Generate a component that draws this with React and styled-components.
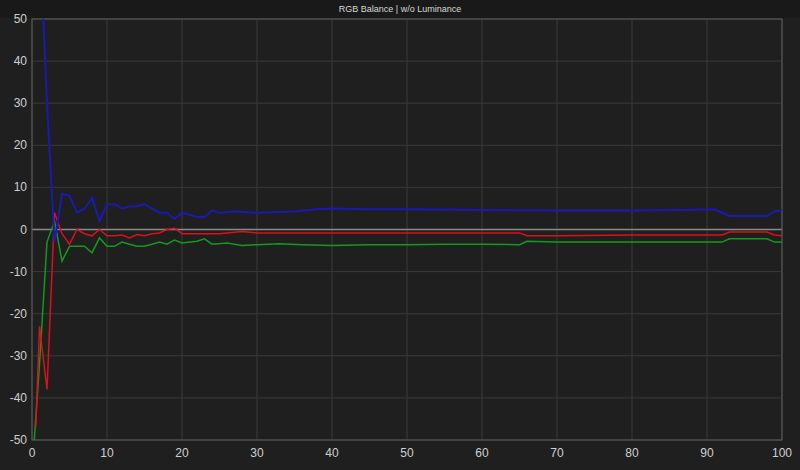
import React from "react";
import styled, { createGlobalStyle } from "styled-components";

const Global = createGlobalStyle`
  body { margin: 0; background: #1f1f1f; font-family: "Liberation Sans", Arial, sans-serif; }
`;

const Frame = styled.div`
  width: 800px;
  height: 470px;
  background: #1f1f1f;
  display: flex;
  flex-direction: column;
`;

const Title = styled.div`
  height: 18px;
  line-height: 18px;
  text-align: center;
  color: #d8d8d8;
  font-size: 9px;
  background: #191919;
`;

const X0 = 32, X1 = 782, Y0 = 19, Y1 = 440;
const px = (x) => X0 + (x / 100) * (X1 - X0);
const py = (v) => Y0 + ((50 - v) / 100) * (Y1 - Y0);

const blue = [[1.5,50],[2,30],[3,-3],[4,8.5],[5,8],[6,4],[7,5],[8,7.5],[9,2],[10,6],[11,6],[12,5],[13,5.5],[14,5.5],[15,6],[16,5],[17,4],[18,4],[19,2.5],[20,4],[21,3.5],[22,3],[23,3],[24,4.5],[25,4],[27,4.3],[30,4],[35,4.3],[38,4.8],[40,5],[45,4.8],[50,4.8],[60,4.6],[70,4.5],[80,4.5],[89,4.7],[91,4.8],[93,3.2],[98,3.2],[99,4.3],[100,4.6]];
const red = [[0.5,-47],[1,-23],[2,-38],[3,4],[4,-1],[5,-3.5],[6,0],[7,-1],[8,-1.5],[9,0],[10,-1.5],[11,-1.5],[12,-1.3],[13,-2],[14,-1.2],[15,-1.5],[16,-1],[17,-0.8],[18,0],[19,0.3],[20,-1],[23,-1],[25,-1],[28,-0.5],[30,-0.8],[40,-0.8],[50,-0.8],[60,-0.8],[65,-0.8],[66,-1.5],[70,-1.5],[80,-1.3],[92,-1.3],[93,-0.6],[98,-0.6],[99,-1.3],[100,-1.5]];
const green = [[0.3,-50],[1,-32],[2,-3],[3,2],[4,-7.5],[5,-4],[6,-4],[7,-4],[8,-5.5],[9,-2],[10,-4],[11,-4],[12,-3],[13,-3.5],[14,-4],[15,-4],[16,-3.5],[17,-3],[18,-3.5],[19,-2.5],[20,-3.2],[22,-2.8],[23,-2.2],[24,-3.5],[26,-3.2],[28,-3.8],[30,-3.6],[33,-3.4],[36,-3.6],[40,-3.8],[45,-3.6],[50,-3.6],[55,-3.5],[60,-3.5],[65,-3.6],[66,-2.8],[70,-3],[80,-3],[92,-3],[93,-2.2],[98,-2.2],[99,-3],[100,-3]];

const pts = (d) => d.map(([x, v]) => `${px(x).toFixed(1)},${py(v).toFixed(1)}`).join(" ");

const ChartSvg = styled.svg`
  display: block;
  overflow: visible;
  font-family: "Liberation Sans", Arial, sans-serif;
`;

export default function App() {
  const xs = [0,10,20,30,40,50,60,70,80,90,100];
  const ys = [50,40,30,20,10,0,-10,-20,-30,-40,-50];
  return (
    <Frame>
      <Global />
      <Title>RGB Balance | w/o Luminance</Title>
      <ChartSvg width="800" height="452" viewBox="0 18 800 452">
        {xs.map((x) => (
          <line key={"x" + x} x1={px(x)} x2={px(x)} y1={Y0} y2={Y1} stroke="#3a3a3a" strokeWidth="1" />
        ))}
        {ys.map((v) => (
          <line key={"y" + v} x1={X0} x2={X1} y1={py(v)} y2={py(v)} stroke={v === 0 ? "#8a8a8a" : "#3a3a3a"} strokeWidth={v === 0 ? 1.5 : 1} />
        ))}
        <rect x={X0} y={Y0} width={X1 - X0} height={Y1 - Y0} fill="none" stroke="#5a5a5a" />
        {ys.map((v) => (
          <text key={"t" + v} x={X0 - 5} y={py(v) + 4} textAnchor="end" fill="#cfcfcf" fontSize="12">{v}</text>
        ))}
        {xs.map((x) => (
          <text key={"l" + x} x={px(x)} y={457} textAnchor="middle" fill="#cfcfcf" fontSize="12">{x}</text>
        ))}
        <polyline points={pts(green)} fill="none" stroke="#139a1c" strokeWidth="1.5" />
        <polyline points={pts(red)} fill="none" stroke="#d9111d" strokeWidth="1.5" />
        <polyline points={pts(blue)} fill="none" stroke="#1a1ab0" strokeWidth="2" />
      </ChartSvg>
    </Frame>
  );
}
